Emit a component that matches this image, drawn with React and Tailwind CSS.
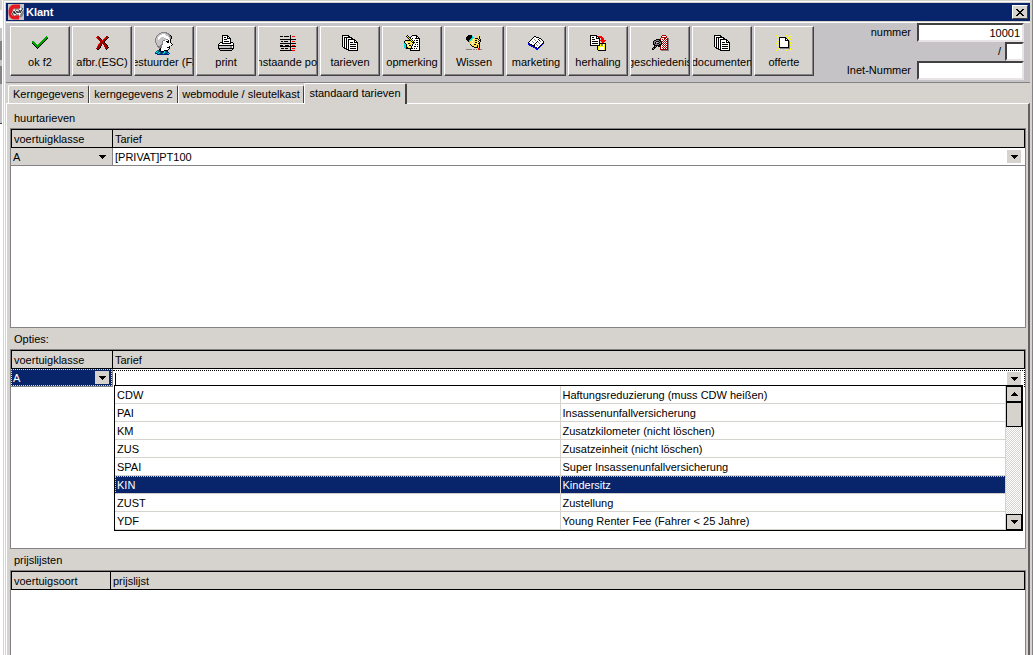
import { useState } from "react";
import clsx from "clsx";

const COLORS = {
  k: "#000000",
  w: "#ffffff",
  g: "#848284",
  l: "#c6c3c6",
  r: "#ff0000",
  R: "#a50000",
  y: "#ffff00",
  Y: "#ffe35a",
  c: "#00e3e7",
  b: "#0000ff",
  n: "#002484",
  t: "#007184",
  G: "#00a200",
};

// One character per pixel, a dot is transparent
const ICONS = {
  check: [
    "..............G.",
    ".............GGG",
    "............GGGk",
    "...........GGGk.",
    "..........GGGk..",
    "GG.......GGGk...",
    "GGG.....GGGk....",
    "kGGG...GGGk.....",
    ".kGGG.GGGk......",
    "..kGGGGGk.......",
    "...kGGGk........",
    "....kGk.........",
    ".....k..........",
    "................",
  ],
  cross: [
    ".rR.......RR.",
    "rRRk.....rRRk",
    ".RRRk...rRRk.",
    "..RRRk.rRRk..",
    "...RRRrRRk...",
    "....RRRRk....",
    "....RRRRk....",
    "...rRRRRRk...",
    "..rRRk.RRRk..",
    "..RRRk..RRRk.",
    ".rRRk...RRRk.",
    ".RRRk....RRRk",
    "RRRk.....RRk.",
    ".kk.......k..",
  ],
  driver: [
    "......gggggg......",
    "....gglllllggg....",
    "...glllwwwlllgg...",
    "..gllwwwwwwlllgk..",
    ".gllwwwwwwwwwlggk.",
    ".glwwwlllwwwwwlgk.",
    "gllwwllllllwwwlgk.",
    "gllwlllllllggwwk..",
    "glllllllggwwwkwk..",
    "gllllllgwwwkkkwk..",
    "gllllllgwwwwkkwk..",
    ".glllllgwwwwwwwwk.",
    ".gllllggwwwwwwwwwk",
    "..gllggwwwwwwwwwk.",
    "..gggggwwwwwwwk...",
    "...ggggwwwwwkkk...",
    "....gkwwwwwwwwk...",
    "....kkwwwwwwwk....",
    "..ttnkwwwkkkk.....",
    ".tctnnkkkctnn.....",
    "tcttctnntcttnn....",
    "nntctnntctnntcn...",
    "..nnnnnnnnnnnn....",
  ],
  printer: [
    "....kkkkkk......",
    "....kwwwwkk.....",
    "....kwkkwkwk....",
    "....kwwwwkkkk...",
    "....kwkkkwwwk...",
    "....kwwwwwwwk...",
    "....kwkkkkkwk...",
    "..kkkwwwwwwwkkk.",
    ".kwwkkkkkkkkkwwk",
    "kwwwwwwwwwwwwwwk",
    "kkkkkkkkkkkkkkkk",
    "klllllllllllggwk",
    "klllllllllllggwk",
    "kkkkkkkkkkkkkkkk",
    ".kllllllllllllk.",
    "..kkkkkkkkkkkk..",
  ],
  ledger: [
    "..........k.....",
    "kkk.kkkkk.k.rrr.",
    "..........k.....",
    "..........k.....",
    "kkkkkkkkkkkkkkkk",
    "..........k.....",
    ".kk.kkkk..k.rrr.",
    "..........k.....",
    "kkkkkkkkkkkkkkkk",
    "..........k.....",
    "kkk..kkkk.k.rrr.",
    "kkkkkkkkkkkkkkkk",
    "..........k.....",
    ".kkk.kkk..k.rrr.",
    "..........k.....",
    "kkkkkkkkkkkkrrr.",
  ],
  pages: [
    "kkkkkkk.........",
    "kwwwwwkk........",
    "kwkkkkkkkk......",
    "kwkwkwwwwkk.....",
    "kwkwkwkkkkkkk...",
    "kwkwkwkwwwwwkk..",
    "kwkwkwkwwwwwkwk.",
    "kwkwkwkwkkkwkkkk",
    "kwkwkwkwwwwwwwwk",
    "kwkwkwkwkkkkkkwk",
    "kwkwkwkwwwwwwwwk",
    "kwkwkwkwkkkkkkwk",
    ".kkwkwkwwwwwwwwk",
    "..kkkwkwkkkkkkwk",
    "....kkkwwwwwwwwk",
    "......kkkkkkkkkk",
  ],
  note: [
    "...k....kkkkk...",
    "..kyk..kwwwwkk..",
    "...kykkwwwwwkwk.",
    "....kykwkwwkkkkk",
    ".....kykwwwwwwwk",
    ".kkkkkkykwkwkkwk",
    "kyYYYYykykwwwwwk",
    "kYwYYYYykkkwkkwk",
    "ckYwkkYYYkwwwwwk",
    "cckYYYYYkwwkwkwk",
    "cckYwkkYkwwwwwwk",
    "cckYYYYkwwkkwkwk",
    "cckkYwYkwwwwwwwk",
    ".ckkkkkkkwkwkwwk",
    "......kwwwwwwwwk",
    "......kkkkkkkkkk",
  ],
  erase: [
    "..kkkk......YY..",
    ".kkkkkc.....Yk..",
    "kkkkkkcc....Yk..",
    "kkkkkccYYkkkYk..",
    "kkkkccYwYYYYkYk.",
    ".kkccYYYYkkYYkk.",
    "..kcYYwYYYYYkYk.",
    "...cYYYYYkkYYk..",
    "....YYwYYYYYkk..",
    "....kYYYkkYYYk..",
    ".....kYYYYYkYk..",
    "......kkYYYkYk..",
    "........kkkkYk..",
    "............rr..",
    "gggggg.gg.g.rrgg",
    "................",
  ],
  book: [
    "......kk........",
    ".....kwwkkk.....",
    "....kwwwwwwkk...",
    "...kwwgwwwkwwk..",
    "..kwwwwgwwwkwwk.",
    ".kwwgwwwwkwwgwwk",
    "kwwwwgwwkwgwwwwk",
    "bkwwwwwkwwwgwwkb",
    "bbkkwwkwgwwwwkb.",
    ".bbbkkkwwgwwkb..",
    "...bbbkwwwwkb...",
    ".....bbkkwkb....",
    ".......bbkb.....",
    "........bb......",
  ],
  repeat: [
    "kkkkkkk.........",
    "kwwwwwkkrrrr....",
    "kwkkwwkwkrrrr...",
    "kwwwwwkkkk.rrr..",
    "kwkkkwwwwk.rrr..",
    "kwwwwwwwwkrrrrrr",
    "kwkkkkkkwk.rrrr.",
    "kwwwwwwwwk..rr..",
    "kwkkkkkkwkkkkkkk",
    "kwwwwwwwwkyggwyk",
    "kkkkkkkkkkyggwyk",
    ".......kyyyyyyyk",
    ".......kywwwwwyk",
    ".......kywwwwwyk",
    ".......kywwwwwyk",
    "........kkkkkkkk",
  ],
  history: [
    "..........RRRR...",
    ".........RwwwwR..",
    ".........RRRRRR..",
    "........RwwwRRwRg",
    "....kkkkRwRwRwRRg",
    "..kkgggkkwwRwRwRg",
    ".kggkkkgkRRwRwRRg",
    ".kgkllgkgkwRwRwRg",
    ".kgkgkkggkRwRwRRg",
    ".kkggggkkRwRwRwRg",
    "..kkkkkkkwRwRwRRg",
    "..kgk.kkRwwRwRwRg",
    ".kkk....RwRwRwRRg",
    "kgk.....RwwRwRwRg",
    "kk......RRRRRRRRg",
    ".........gggggggg",
  ],
  star: [
    "y....y....y....y",
    ".y.....y......y.",
    "..ykkkkkkk..yy..",
    "...kwwwwwkk.y...",
    "...kwwwwwkwk..y.",
    ".y.kwwwwwkkkk...",
    "..ykwwwwwwwwkg..",
    "...kwwwwwwwwkgy.",
    "yy.kwwwwwwwwkgyy",
    "...kwwwwwwwwkg..",
    ".yykwwwwwwwwkgy.",
    "...kwwwwwwwwkg..",
    "...kkkkkkkkkkg..",
    "..yyggggggggggy.",
    ".y...y...y....y.",
    "y....y....y....y",
  ],
};

const TOOLS = [
  { icon: "check", label: "ok f2" },
  { icon: "cross", label: "afbr.(ESC)" },
  { icon: "driver", label: "bestuurder (F3)" },
  { icon: "printer", label: "print" },
  { icon: "ledger", label: "openstaande posten" },
  { icon: "pages", label: "tarieven" },
  { icon: "note", label: "opmerking" },
  { icon: "erase", label: "Wissen" },
  { icon: "book", label: "marketing" },
  { icon: "repeat", label: "herhaling" },
  { icon: "history", label: "geschiedenis" },
  { icon: "pages", label: "documenten" },
  { icon: "star", label: "offerte" },
];

const TABS = [
  { label: "Kerngegevens", width: "w-[81px]" },
  { label: "kerngegevens 2", width: "w-[89px]" },
  { label: "webmodule / sleutelkast", width: "w-[126px]" },
  { label: "standaard tarieven", width: "w-[103px]" },
];

const OPTIONS = [
  ["CDW", "Haftungsreduzierung (muss CDW heißen)"],
  ["PAI", "Insassenunfallversicherung"],
  ["KM", "Zusatzkilometer (nicht löschen)"],
  ["ZUS", "Zusatzeinheit (nicht löschen)"],
  ["SPAI", "Super Insassenunfallversicherung"],
  ["KIN", "Kindersitz"],
  ["ZUST", "Zustellung"],
  ["YDF", "Young Renter Fee (Fahrer < 25 Jahre)"],
];

function PixelIcon({ name }) {
  const rows = ICONS[name];
  const width = rows[0].length;
  return (
    <svg
      width={width}
      height={rows.length}
      viewBox={`0 0 ${width} ${rows.length}`}
      shapeRendering="crispEdges"
      className="shrink-0"
      aria-hidden="true"
    >
      {rows.map((row, y) =>
        [...row].map((c, x) =>
          c === "." ? null : (
            <rect key={`${x}-${y}`} x={x} y={y} width="1" height="1" fill={COLORS[c]} />
          )
        )
      )}
    </svg>
  );
}

function Arrow({ up }) {
  return (
    <svg width="7" height="4" viewBox="0 0 7 4" shapeRendering="crispEdges" aria-hidden="true">
      <path d={up ? "M3 0h1v1h1v1h1v1h1v1H0V3h1V2h1V1h1z" : "M0 0h7v1H6v1H5v1H4v1H3V3H2V2H1V1H0z"} />
    </svg>
  );
}

function Logo() {
  return (
    <svg width="16" height="16" viewBox="0 0 16 16" className="shrink-0" aria-hidden="true">
      <rect width="16" height="16" fill="#c6c3c6" />
      <circle cx="10" cy="8" r="6" fill="#848284" />
      <path d="M12 2.5H6Q2.5 3 2.5 8T6 13.5H11" fill="none" stroke="#e71821" strokeWidth="4" />
      <path d="M4 11l2-4 1 3 2-3 1 2 2-3v3l3-5" fill="none" stroke="#fff" strokeWidth="2" />
      <path d="M4 11l2-4 1 3 2-3 1 2 2-3v3l3-5" fill="none" stroke="#222" strokeWidth="1" />
    </svg>
  );
}

function ToolButton({ icon, label }) {
  return (
    <button
      type="button"
      className="flex h-[50px] w-[60px] shrink-0 flex-col items-center overflow-hidden border-t border-r border-b border-l border-t-white border-r-[#424142] border-b-[#424142] border-l-white bg-[#d6d3ce] pt-1 shadow-[inset_-1px_-1px_0_#848284]"
    >
      <span className="flex h-6 items-center">
        <PixelIcon name={icon} />
      </span>
      <span className="leading-[14px] whitespace-nowrap">{label}</span>
    </button>
  );
}

const FIELD =
  "h-[19px] border-2 border-t-[#424142] border-l-[#424142] border-r-[#e7e3e7] border-b-[#e7e3e7] bg-white pr-0.5 text-right outline-none";

function NumberFields() {
  return (
    <div className="mr-1.5 flex flex-col items-end">
      <div className="flex items-center gap-1.5">
        <label htmlFor="nummer">nummer</label>
        <input id="nummer" defaultValue="10001" className={clsx(FIELD, "w-[107px]")} />
      </div>
      <div className="flex items-center gap-1">
        <label htmlFor="volgnummer">/</label>
        <input id="volgnummer" className={clsx(FIELD, "w-[19px]")} />
      </div>
      <div className="flex items-center gap-1.5">
        <label htmlFor="inet">Inet-Nummer</label>
        <input id="inet" className={clsx(FIELD, "w-[107px]")} />
      </div>
    </div>
  );
}

function GridHead({ columns, firstWidth }) {
  return (
    <>
      <colgroup>
        <col className={firstWidth} />
        <col />
      </colgroup>
      <thead>
        <tr className="h-[19px] bg-[#d6d3ce] text-left">
          <th className="border border-black p-0 pl-0.5 font-normal">{columns[0]}</th>
          <th className="border-t border-r border-b border-black p-0 pl-0.5 font-normal">{columns[1]}</th>
        </tr>
      </thead>
    </>
  );
}

const TABLE = "w-full table-fixed border-separate border-spacing-0 leading-[14px]";

function ClassSelect({ selected }) {
  return (
    <div
      className={clsx(
        "flex h-[17px] items-center",
        selected
          ? "bg-[#08246b] text-white outline-1 -outline-offset-1 outline-dotted outline-[#ffe39c]"
          : "bg-[#d6d3ce]"
      )}
    >
      <select aria-label="voertuigklasse" className="h-full min-w-0 flex-1 appearance-none bg-transparent pl-0.5 outline-none">
        <option>A</option>
      </select>
      <span className="mr-[3px] flex h-[13px] w-3.5 items-center justify-center bg-[#d6d3ce] text-black">
        <Arrow />
      </span>
    </div>
  );
}

function OptionList({ current, onPick }) {
  return (
    <div className="absolute top-4 right-0.5 left-px z-10 flex border border-black bg-white">
      <table className="flex-1 table-fixed border-separate border-spacing-0 leading-[14px]">
        <tbody>
          {OPTIONS.map(([code, text]) => (
            <tr
              key={code}
              onClick={() => onPick(code)}
              className={clsx(
                "h-[18px]",
                code === current && "bg-[#08246b] text-white outline-1 -outline-offset-1 outline-dotted outline-[#ffc34a]"
              )}
            >
              <td className="w-1/2 border-r border-b border-[#d6d3ce] p-0 pl-0.5">{code}</td>
              <td className="w-1/2 border-r border-b border-[#d6d3ce] p-0 pl-0.5">{text}</td>
            </tr>
          ))}
        </tbody>
      </table>
      <div className="flex w-4 flex-col bg-[repeating-conic-gradient(#d6d3ce_0_25%,#ffffff_0_50%)] bg-[size:2px_2px]">
        <button type="button" aria-label="omhoog" className="flex h-4 items-center justify-center border border-black bg-[#d6d3ce]">
          <Arrow up />
        </button>
        <div className="h-[25px] border border-black bg-[#d6d3ce]" />
        <button type="button" aria-label="omlaag" className="mt-auto flex h-4 items-center justify-center border border-black bg-[#d6d3ce]">
          <Arrow />
        </button>
      </div>
    </div>
  );
}

export default function App() {
  const [tab, setTab] = useState("standaard tarieven");
  const [option, setOption] = useState("KIN");

  return (
    <div className="flex min-h-screen bg-[#d6d3ce] font-['Liberation_Sans',Arial,sans-serif] text-[11px] text-black">
      {/* edge of the window behind */}
      <div className="flex w-0.5 shrink-0 flex-col bg-white">
        <div className="h-[10px] bg-[#d6d3ce]" />
        <div className="h-[18px] bg-white" />
        <div className="h-[14px] border-b border-[#848284] bg-[#c6c3c6]" />
        <div className="h-[18px] bg-[#848284]" />
        <div className="h-[6px] bg-[#c6c3c6]" />
        <div className="h-[18px] bg-[#848284]" />
        <div className="h-[40px] border-b border-[#424142] bg-[#c6c3c6]" />
      </div>

      <div className="flex min-w-0 flex-1 border-r border-l border-r-[#848284] border-l-white pt-px pr-0.5 pl-px">
        <div className="flex min-w-0 flex-1 flex-col border-t border-l border-white pt-px pl-px">
          <header className="flex h-[18px] items-center bg-[#08246b] pr-0.5 pl-0.5 text-white">
            <Logo />
            <h1 className="flex-1 pl-0.5 text-[11px] font-bold">Klant</h1>
            <button
              type="button"
              aria-label="sluiten"
              className="flex h-3.5 w-4 items-center justify-center border border-t-white border-r-[#424142] border-b-[#424142] border-l-white bg-[#d6d3ce]"
            >
              <svg width="8" height="7" viewBox="0 0 8 7" shapeRendering="crispEdges">
                <path d="M0 0h2v1h1v1h2V1h1V0h2v1H7v1H6v1H5v1h1v1h1v1h1v1H6V6H5V5H3v1H2v1H0V6h1V5h1V4h1V3H2V2H1V1H0z" />
              </svg>
            </button>
          </header>

          <div className="mt-px flex items-start border-t border-b border-t-white border-b-[#848284] bg-[#c6c3c6]">
            <div className="flex flex-1 gap-0.5 pt-[3px] pb-[6px] pl-1">
              {TOOLS.map((tool) => (
                <ToolButton key={tool.label} {...tool} />
              ))}
            </div>
            <NumberFields />
          </div>

          <nav className="flex h-5 items-end pl-0.5">
            {TABS.map(({ label, width }) => (
              <button
                key={label}
                type="button"
                onClick={() => setTab(label)}
                className={clsx(
                  "rounded-t-xs border-t border-l border-t-white border-l-white bg-[#d6d3ce] whitespace-nowrap",
                  width,
                  tab === label
                    ? "relative -mb-px h-[21px] border-r-2 border-r-[#424142] pb-0.5"
                    : "h-[18px] border-r border-r-[#424142]"
                )}
              >
                {label}
              </button>
            ))}
          </nav>

          <main className="flex flex-1 flex-col border-t border-r-2 border-l border-t-white border-r-[#636163] border-l-white pr-0.5 pl-[3px]">
            <h2 className="flex h-6 items-center pt-1 pl-1">huurtarieven</h2>
            <section className="h-[200px] border border-[#848284] bg-white">
              <table className={TABLE}>
                <GridHead columns={["voertuigklasse", "Tarief"]} firstWidth="w-[102px]" />
                <tbody>
                  <tr className="h-[18px]">
                    <td className="border-r border-b border-[#848284] p-0">
                      <ClassSelect />
                    </td>
                    <td className="border-b border-[#848284] p-0">
                      <div className="flex h-[17px] items-center">
                        <select aria-label="Tarief" className="h-full min-w-0 flex-1 appearance-none bg-transparent pl-0.5 outline-none">
                          <option>[PRIVAT]PT100</option>
                        </select>
                        <span className="mr-1 flex h-[13px] w-3.5 items-center justify-center bg-[#d6d3ce]">
                          <Arrow />
                        </span>
                      </div>
                    </td>
                  </tr>
                </tbody>
              </table>
            </section>

            <h2 className="flex h-[21px] items-center pt-0.5 pl-1">Opties:</h2>
            <section className="h-[200px] border border-[#848284] bg-white">
              <table className={TABLE}>
                <GridHead columns={["voertuigklasse", "Tarief"]} firstWidth="w-[102px]" />
                <tbody>
                  <tr className="h-[18px]">
                    <td className="border-r border-b border-[#848284] p-0">
                      <ClassSelect selected />
                    </td>
                    <td className="relative p-0">
                      <div className="flex h-[17px] items-center border-t border-r border-dotted border-black pl-0.5">
                        <span className="h-3 w-px bg-black" />
                        <input aria-label="Tarief" className="h-full min-w-0 flex-1 bg-transparent outline-none" />
                        <button type="button" aria-label="lijst openen" className="mr-[3px] flex h-[13px] w-3.5 items-center justify-center bg-[#d6d3ce]">
                          <Arrow />
                        </button>
                      </div>
                      <OptionList current={option} onPick={setOption} />
                    </td>
                  </tr>
                </tbody>
              </table>
            </section>

            <h2 className="flex h-[21px] items-center pt-0.5 pl-1">prijslijsten</h2>
            <section className="min-h-20 flex-1 border-t border-r border-l border-[#848284] bg-white">
              <table className={TABLE}>
                <GridHead columns={["voertuigsoort", "prijslijst"]} firstWidth="w-[100px]" />
              </table>
            </section>
          </main>
        </div>
      </div>
    </div>
  );
}
